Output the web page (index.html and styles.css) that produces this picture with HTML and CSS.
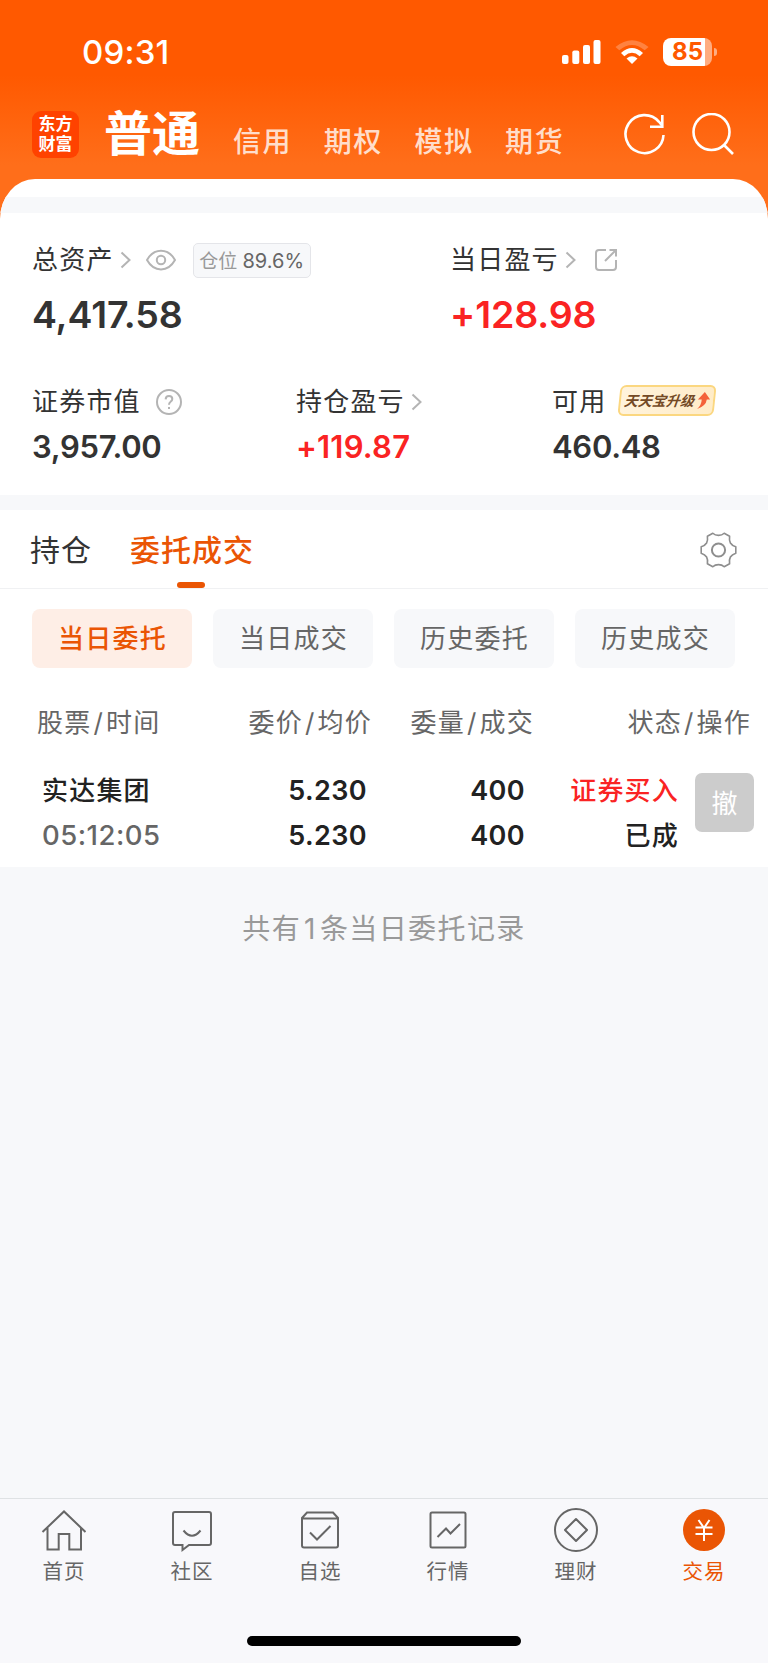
FILE: index.html
```html
<!DOCTYPE html>
<html lang="zh-CN">
<head>
  <meta charset="UTF-8">
  <meta name="viewport" content="width=device-width, initial-scale=1.0">
  <title>交易</title>
  <link rel="stylesheet" href="styles.css">
</head>
<body>
  <div class="app">
    <header class="header">
      <div class="status-bar">
        <span class="time">09:31</span>
        <div class="status-icons">
          <svg class="signal" width="39" height="24" viewBox="0 0 39 24" fill="#fff">
            <rect x="0" y="15" width="6.5" height="9" rx="2"/>
            <rect x="10.3" y="10.5" width="7" height="13.5" rx="2"/>
            <rect x="21" y="5" width="7" height="19" rx="2"/>
            <rect x="31.5" y="0" width="7" height="24" rx="2"/>
          </svg>
          <svg class="wifi" width="34" height="24" viewBox="0 0 34 24">
            <path d="M0.5 7 Q17 -6.5 33.5 7 L29.7 10.3 Q17 -0.5 4.3 10.3Z" fill="#fff" opacity=".25"/>
            <path d="M6 13 Q17 3.2 28 13 L24.7 16.2 Q17 9.4 9.3 16.2Z" fill="#fff"/>
            <path d="M11.5 18.4 Q17 14 22.5 18.4 L17 24Z" fill="#fff"/>
          </svg>
          <div class="battery"><span>85</span></div>
        </div>
      </div>
      <div class="nav">
        <div class="logo">东方<br>财富</div>
        <h1>普通</h1>
        <nav class="nav-links">
          <a>信用</a>
          <a>期权</a>
          <a>模拟</a>
          <a>期货</a>
        </nav>
        <svg class="refresh" width="42" height="42" viewBox="0 0 42 42" fill="none" stroke="#fff" stroke-width="2.6">
          <path d="M39.5 22 A19 19 0 1 1 35 8.8 L38 12.5"/>
          <path d="M38.3 2 V13.7 H26"/>
        </svg>
        <svg class="search" width="42" height="42" viewBox="0 0 42 42" fill="none" stroke="#fff" stroke-width="2.6">
          <circle cx="19.5" cy="19" r="18"/>
          <path d="M31.5 31.5 L41 41"/>
        </svg>
      </div>
    </header>

    <main class="card">
      <div class="strip"></div>
      <section class="summary">
        <div class="totals">
          <div>
            <div class="label">总资产
              <svg class="arrow" width="11" height="18" viewBox="0 0 11 18"><path d="M1.5 1.5 L9.5 9 L1.5 16.5"/></svg>
              <svg class="eye" width="30" height="22" viewBox="0 0 30 22">
                <path d="M1 11 C8 -1.5 22 -1.5 29 11 C22 23.5 8 23.5 1 11Z"/>
                <circle cx="15" cy="11" r="4.2"/>
              </svg>
              <span class="badge">仓位 <b>89.6%</b></span>
            </div>
            <div class="value">4,417.58</div>
          </div>
          <div>
            <div class="label">当日盈亏
              <svg class="arrow" width="11" height="18" viewBox="0 0 11 18"><path d="M1.5 1.5 L9.5 9 L1.5 16.5"/></svg>
              <svg class="share" width="24" height="24" viewBox="0 0 24 24">
                <path d="M12 2 H5 Q2 2 2 5 V19 Q2 22 5 22 H19 Q22 22 22 19 V12"/>
                <path d="M11 13 L22 2 M15.5 2 H22 V8.5"/>
              </svg>
            </div>
            <div class="value red">+128.98</div>
          </div>
        </div>
        <div class="details">
          <div>
            <div class="label">证券市值
              <svg class="help" width="26" height="26" viewBox="0 0 26 26">
                <circle cx="13" cy="13" r="12"/>
                <path d="M9.6 10.4 Q9.8 7 13 7 Q16.3 7 16.3 10 Q16.3 11.6 14.6 12.7 Q13 13.8 13 15.8 M13 18 V20"/>
              </svg>
            </div>
            <div class="value">3,957.00</div>
          </div>
          <div>
            <div class="label">持仓盈亏
              <svg class="arrow" width="11" height="18" viewBox="0 0 11 18"><path d="M1.5 1.5 L9.5 9 L1.5 16.5"/></svg>
            </div>
            <div class="value red">+119.87</div>
          </div>
          <div>
            <div class="label">可用
              <span class="promo"><i>天天宝升级</i>
                <svg width="13" height="17" viewBox="0 0 13 17"><path d="M7 0 L13 7.5 H9.7 Q9.5 14 1 17 Q5 13 4.6 7.5 H0.8Z" fill="#f4623a"/></svg>
              </span>
            </div>
            <div class="value">460.48</div>
          </div>
        </div>
      </section>
      <div class="strip"></div>

      <div class="tabs">
        <span class="tab">持仓</span>
        <span class="tab active">委托成交</span>
        <svg class="gear" width="37" height="36" viewBox="0 0 37 36" fill="none" stroke="#8e8e8e">
          <path stroke-width="1.6" stroke-linejoin="round" d="M12.8 1.2 Q15 3.4 18.5 3.4 Q22 3.4 24.2 1.2 L29.6 4.2 Q29 8.5 30.4 11 Q32 13.6 35.8 14.8 V21.2 Q32 22.4 30.4 25 Q29 27.5 29.6 31.8 L24.2 34.8 Q22 32.6 18.5 32.6 Q15 32.6 12.8 34.8 L7.4 31.8 Q8 27.5 6.6 25 Q5 22.4 1.2 21.2 V14.8 Q5 13.6 6.6 11 Q8 8.5 7.4 4.2Z"/>
          <circle cx="18.5" cy="18" r="6.6" stroke-width="2"/>
        </svg>
      </div>

      <div class="filters">
        <button class="active">当日委托</button>
        <button>当日成交</button>
        <button>历史委托</button>
        <button>历史成交</button>
      </div>

      <div class="row head">
        <span>股票<em>/</em>时间</span>
        <span>委价<em>/</em>均价</span>
        <span>委量<em>/</em>成交</span>
        <span>状态<em>/</em>操作</span>
      </div>
      <div class="row order">
        <div class="name">实达集团<br><span class="order-time">05:12:05</span></div>
        <div class="num">5.230<br>5.230</div>
        <div class="num">400<br>400</div>
        <div class="state"><span class="red">证券买入</span><br>已成</div>
        <button class="cancel">撤</button>
      </div>
    </main>

    <p class="count">共有<span>1</span>条当日委托记录</p>

    <footer class="tabbar">
      <div class="items">
        <a>
          <svg width="46" height="46" viewBox="0 0 46 46">
            <path d="M1.5 25 L23 4.5 L44.5 25 M6.5 21 V42.5 H17.7 V27 H28.3 V42.5 H40 V21"/>
          </svg>
          首页
        </a>
        <a>
          <svg width="46" height="46" viewBox="0 0 46 46">
            <path d="M6 5 H40 Q42 5 42 7 V36 Q42 38 40 38 H20 L13.5 43 V38 H6 Q4 38 4 36 V7 Q4 5 6 5Z"/>
            <path d="M14.5 23.5 Q23 34 31.5 23.5"/>
          </svg>
          社区
        </a>
        <a>
          <svg width="46" height="46" viewBox="0 0 46 46">
            <path d="M5 11 L10 5.5 H36 L41 11 V38.5 Q41 40.5 39 40.5 H7 Q5 40.5 5 38.5Z M5 11.5 H41"/>
            <path d="M13 25.5 L20 32.5 L33.5 19"/>
          </svg>
          自选
        </a>
        <a>
          <svg width="46" height="46" viewBox="0 0 46 46">
            <rect x="5.5" y="5.5" width="35" height="35" rx="1.5"/>
            <path d="M12.5 30 L21 21.5 L25.5 26.5 L35 17"/>
          </svg>
          行情
        </a>
        <a>
          <svg width="46" height="46" viewBox="0 0 46 46">
            <circle cx="23" cy="23" r="21"/>
            <path d="M23 12 L34 23 L23 34 L12 23Z" stroke-linejoin="round"/>
          </svg>
          理财
        </a>
        <a class="active">
          <svg width="46" height="46" viewBox="0 0 46 46">
            <circle cx="23" cy="23" r="21" fill="#ea5504" stroke="none"/>
            <path d="M17.5 13 L23 21 L28.5 13 M23 21 V34 M14.5 20.5 H31.5 M14.5 27 H31.5" stroke="#fff"/>
          </svg>
          交易
        </a>
      </div>
      <div class="home-bar"></div>
    </footer>
  </div>
</body>
</html>
```
FILE: styles.css
```css
* {
  box-sizing: border-box;
}

body {
  margin: 0;
  font-family: Inter, "Noto Sans CJK SC", sans-serif;
  color: #333;
  background-color: #f7f8fa;
}

.app {
  width: 768px;
  height: 1663px;
  display: flex;
  flex-direction: column;
  background: linear-gradient(#ff5900 0, #ff5900 75px, #ff6e1a 165px, #ff6e1a 230px, #f7f8fa 230px);
}

svg {
  flex-shrink: 0;
}

h1, p {
  margin: 0;
}

button {
  padding: 0;
  border: none;
  font-family: inherit;
}

.red {
  color: #fa2323;
}

/* header */
.header {
  height: 179px;
  color: white;
}

.status-bar {
  height: 103px;
  padding: 0 51px 0 82px;
  display: flex;
  align-items: center;
  justify-content: space-between;
}

.time {
  font-size: 33px;
  font-weight: 500;
  letter-spacing: 0.2px;
}

.status-icons {
  display: flex;
  align-items: center;
}

.wifi {
  margin: 0 14px;
}

.battery {
  position: relative;
  width: 49px;
  height: 28px;
  margin-right: 5px;
  border-radius: 8px;
  background: linear-gradient(90deg, #fff 42px, #ffac80 42px);
  color: #ff5900;
  font-size: 24px;
  font-weight: 700;
  line-height: 28px;
  text-align: center;
}

.battery::after {
  content: "";
  position: absolute;
  left: 51px;
  top: 10px;
  width: 3px;
  height: 8px;
  border-radius: 0 3px 3px 0;
  background-color: #ffac80;
}

.nav {
  height: 62px;
  padding-left: 32px;
  display: flex;
  align-items: center;
}

.logo {
  width: 47px;
  height: 47px;
  border-radius: 9px;
  background-color: #ff4200;
  font-size: 17px;
  font-weight: 700;
  line-height: 20px;
  padding-top: 3px;
  text-align: center;
}

.nav h1 {
  margin-left: 25px;
  width: 129px;
  font-size: 48px;
  font-weight: 700;
  line-height: 62px;
}

.nav-links {
  display: flex;
  gap: 31.5px;
  width: 391px;
  padding-top: 16px;
  font-size: 28px;
  font-weight: 500;
  letter-spacing: 1.6px;
  line-height: 46px;
  color: rgba(255, 255, 255, 0.8);
}

.search {
  margin-left: 26px;
}

/* account summary */
.card {
  border-radius: 35px 35px 0 0 / 40px 40px 0 0;
  padding-top: 18px;
  background-color: white;
  overflow: hidden;
}

.strip {
  height: 16px;
  background-color: #f7f8fa;
}

.summary + .strip {
  height: 15px;
}

.summary {
  height: 282px;
  padding: 27px 32px 0;
}

.totals {
  display: grid;
  grid-template-columns: 418px 1fr;
  margin-bottom: 42px;
}

.details {
  display: grid;
  grid-template-columns: 264px 256px 1fr;
}

.label {
  display: flex;
  align-items: center;
  height: 40px;
  font-size: 26px;
  letter-spacing: 1.2px;
  line-height: 40px;
  white-space: nowrap;
}

.label svg {
  fill: none;
  stroke: #b4b4b4;
  stroke-width: 2;
}

.arrow {
  margin-left: 6px;
}

.eye {
  margin-left: 15px;
}

.share {
  margin-left: 18px;
}

.help {
  margin-left: 15px;
}

.badge {
  width: 118px;
  height: 35px;
  margin-left: 17px;
  border: 1px solid #e4e5e9;
  border-radius: 5px;
  background-color: #f7f8fa;
  color: #999;
  font-size: 19px;
  letter-spacing: 0;
  line-height: 35px;
  text-align: center;
}

.badge b {
  color: #666;
  font-size: 20px;
  font-weight: 400;
}

.totals .value {
  margin-top: 10px;
  font-size: 37.5px;
  font-weight: 600;
  letter-spacing: -0.1px;
  line-height: 50px;
}

.details .value {
  margin-top: 5px;
  font-size: 31px;
  font-weight: 600;
  letter-spacing: -0.3px;
  line-height: 40px;
}

.details .red {
  letter-spacing: 0.2px;
}

.promo {
  display: flex;
  align-items: center;
  justify-content: center;
  gap: 3px;
  width: 96px;
  height: 31px;
  margin: -3px 0 0 13px;
  border: 2px solid #fbd780;
  border-radius: 6px;
  background: linear-gradient(90deg, #fff3dc, #ffecc8);
  transform: skewX(-6deg);
  color: #744a26;
  font-size: 14px;
  font-weight: 700;
  letter-spacing: 0;
  line-height: 26px;
}

.promo svg {
  stroke: none;
}

/* tabs */
.tabs {
  display: flex;
  align-items: center;
  height: 79px;
  padding: 0 31px 0 30px;
  border-bottom: 1px solid #f0f1f3;
  font-size: 30px;
  letter-spacing: 1px;
}

.tab {
  position: relative;
  height: 78px;
  line-height: 80px;
}

.tab.active {
  margin-left: 38px;
  color: #ea5504;
  font-weight: 500;
}

.tab.active::after {
  content: "";
  position: absolute;
  left: 47px;
  bottom: 0;
  width: 28px;
  height: 6px;
  border-radius: 3px;
  background-color: #ea5504;
}

.gear {
  margin: 2px 0 0 auto;
}

.filters {
  display: grid;
  grid-template-columns: repeat(4, 160px);
  gap: 21px;
  padding: 20px 32px 0;
}

.filters button {
  height: 59px;
  padding: 0 0 4px 1px;
  border-radius: 8px;
  background-color: #f7f8fa;
  color: #666;
  font-size: 26px;
  letter-spacing: 1.2px;
}

.filters .active {
  background-color: #feeee6;
  color: #ea5504;
  font-weight: 500;
}

/* orders */
.row {
  display: grid;
  font-size: 26px;
  letter-spacing: 1.2px;
  text-align: right;
}

.row > :first-child {
  text-align: left;
}

.head {
  grid-template-columns: 161px 174px 162px 217px;
  padding-left: 37px;
  margin-top: 35px;
  line-height: 40px;
  color: #666;
}

.head em {
  margin: 0 2px;
  font-style: normal;
}

.order {
  grid-template-columns: 147px 178px 158px 154px 59px;
  height: 124px;
  padding: 25px 0 0 42px;
  color: #222;
  font-weight: 500;
  line-height: 45px;
}

.num {
  font-size: 27px;
  font-weight: 600;
  letter-spacing: 0.4px;
}

.order-time {
  color: #666;
  font-size: 27.5px;
  letter-spacing: 0.5px;
}

.cancel {
  width: 59px;
  height: 59px;
  margin: 5px 0 0 16px;
  padding-bottom: 3px;
  border-radius: 7px;
  background-color: #ccc;
  color: white;
  font-size: 26px;
}

.count {
  padding-top: 42px;
  font-size: 28px;
  letter-spacing: 1.4px;
  line-height: 40px;
  text-align: center;
  color: #999;
}

.count span {
  margin: 0 3px;
}

/* bottom bar */
.tabbar {
  margin-top: auto;
  height: 165px;
  border-top: 1px solid #dfe2e4;
  background-color: #f8f8fb;
}

.items {
  display: grid;
  grid-template-columns: repeat(6, 1fr);
  padding-top: 8px;
}

.items a {
  display: flex;
  flex-direction: column;
  align-items: center;
  font-size: 20.5px;
  letter-spacing: 1px;
  line-height: 37px;
  color: #666;
}

.items svg {
  fill: none;
  stroke: #666;
  stroke-width: 2;
}

.items .active {
  color: #ea5504;
}

.home-bar {
  width: 274px;
  height: 10px;
  margin: 46px auto 0;
  border-radius: 5px;
  background-color: black;
}
```
